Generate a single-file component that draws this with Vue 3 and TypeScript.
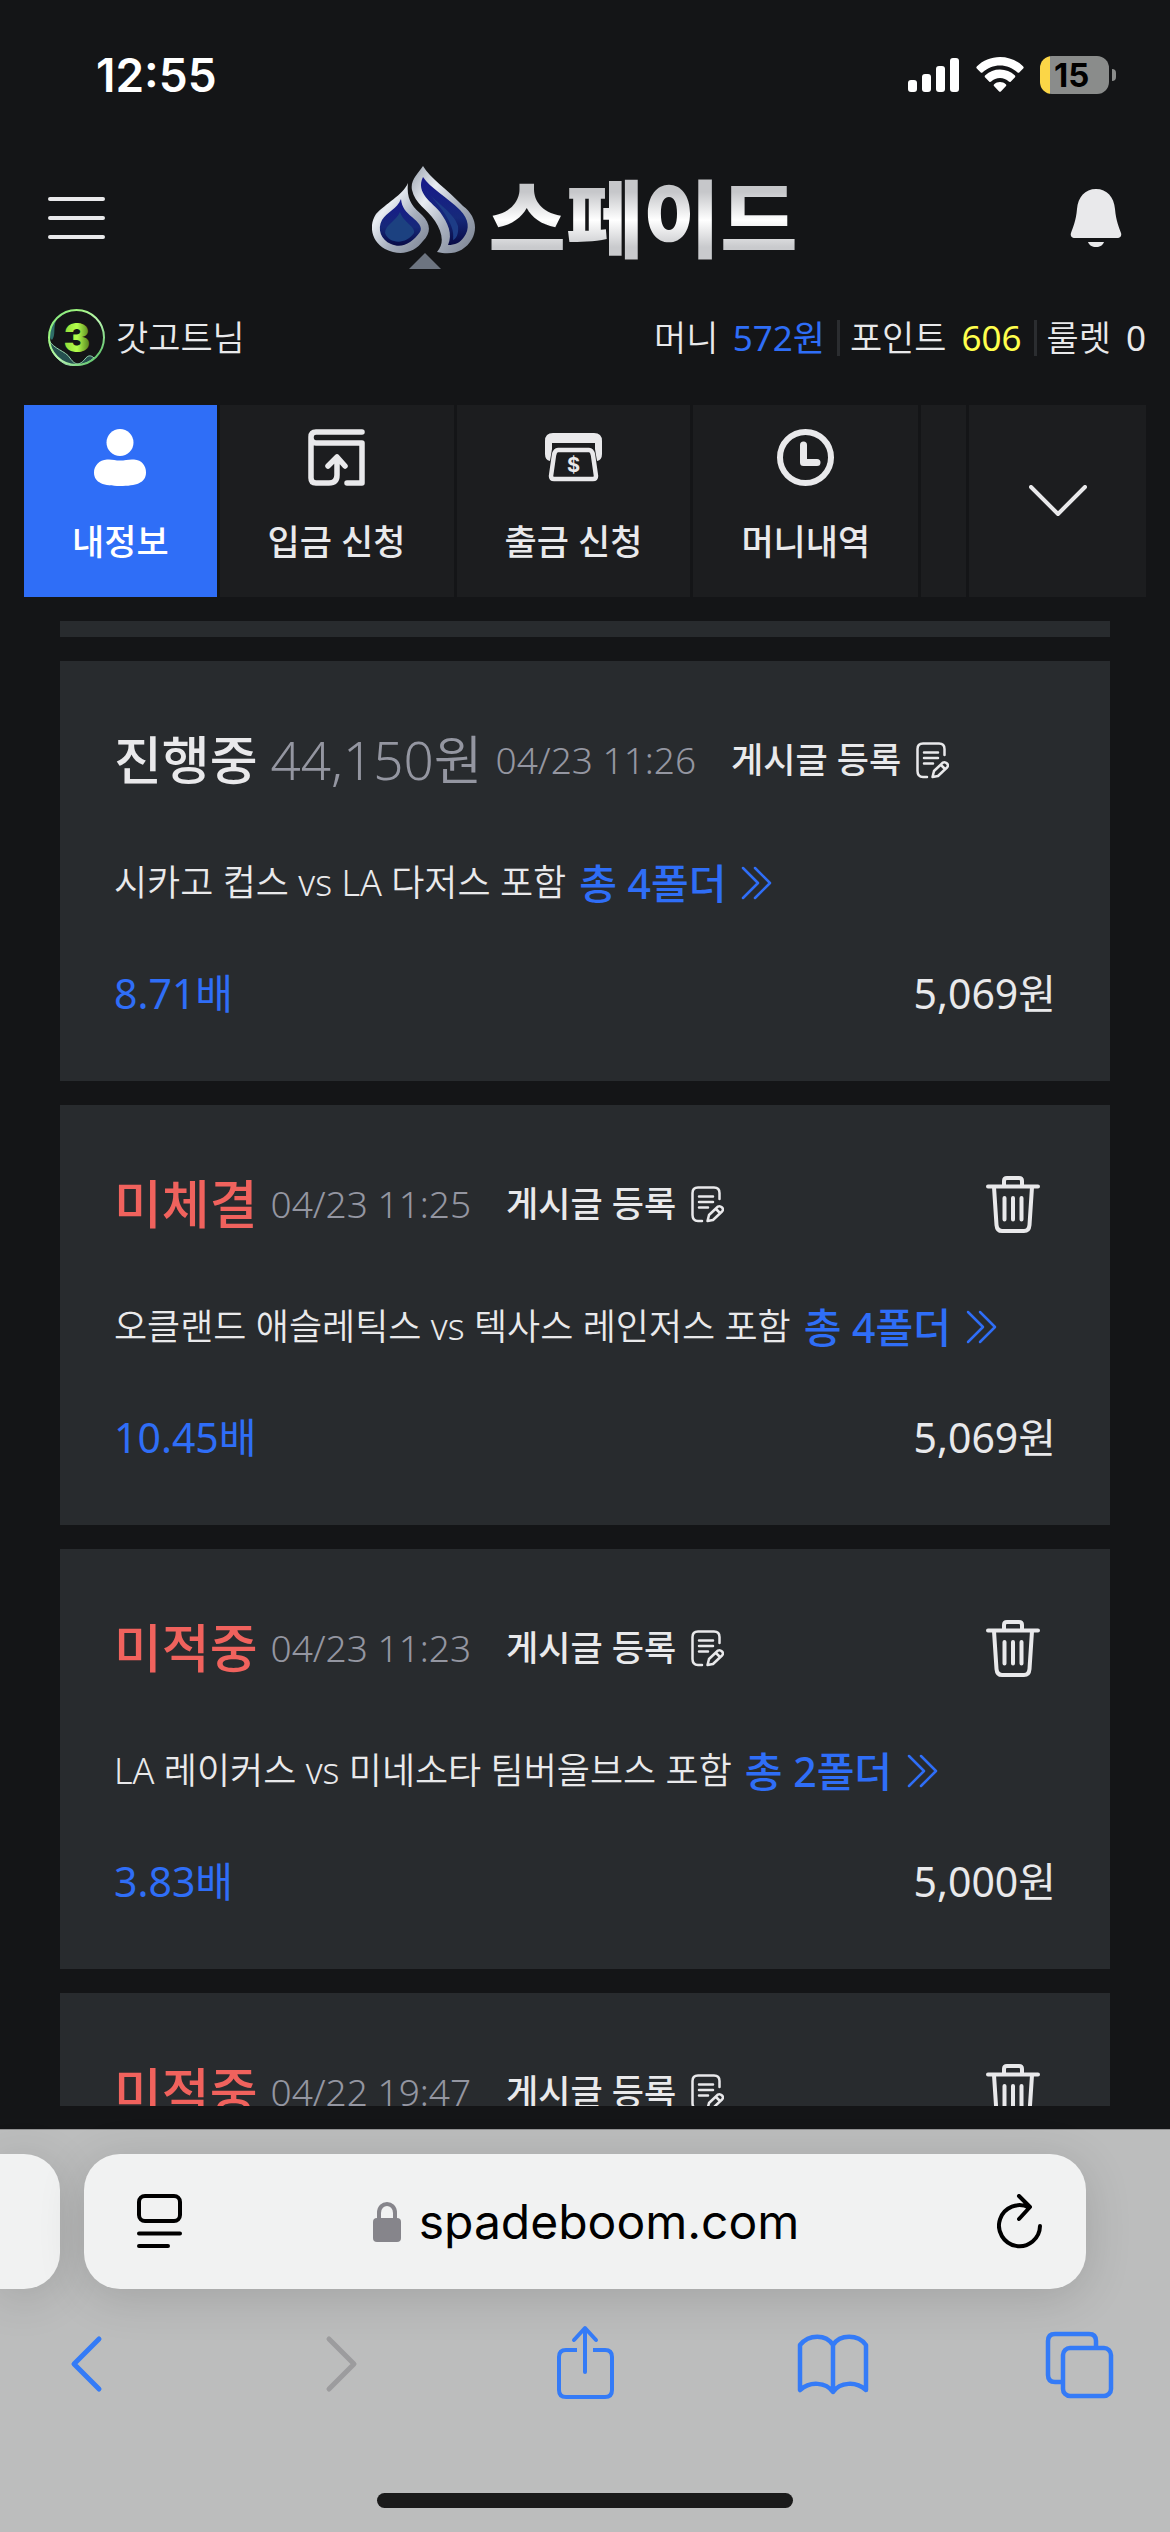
<script setup lang="ts">
interface Bet {
  status: string
  lost: boolean
  amount?: string
  date: string
  match?: string
  folders?: string
  odds?: string
  stake?: string
}

const bets: Bet[] = [
  { status: '진행중', lost: false, amount: '44,150원', date: '04/23 11:26', match: '시카고 컵스 vs LA 다저스 포함', folders: '총 4폴더', odds: '8.71배', stake: '5,069원' },
  { status: '미체결', lost: true, date: '04/23 11:25', match: '오클랜드 애슬레틱스 vs 텍사스 레인저스 포함', folders: '총 4폴더', odds: '10.45배', stake: '5,069원' },
  { status: '미적중', lost: true, date: '04/23 11:23', match: 'LA 레이커스 vs 미네소타 팀버울브스 포함', folders: '총 2폴더', odds: '3.83배', stake: '5,000원' },
  { status: '미적중', lost: true, date: '04/22 19:47' },
]
</script>

<template>
  <div class="screen">
    <div class="status-bar">
      <time class="clock">12:55</time>
      <div class="indicators">
        <svg width="52" height="36" viewBox="0 0 52 36" fill="#fff">
          <rect x="0" y="23" width="9" height="12" rx="3" />
          <rect x="14" y="17" width="9" height="18" rx="3" />
          <rect x="28" y="9" width="9" height="26" rx="3" />
          <rect x="42" y="1" width="9" height="34" rx="3" />
        </svg>
        <svg width="48" height="36" viewBox="0 0 48 36" fill="#fff">
          <path d="M24 0C33 0 41 3.500 47 9.200c.9.900.9 1.600.2 2.400l-3.700 3.700c-.7.700-1.500.7-2.200 0C36.500 11 30.500 8.500 24 8.500S11.500 11 6.700 15.300c-.7.700-1.500.7-2.200 0L.8 11.600c-.7-.8-.7-1.500.2-2.400C7 3.500 15 0 24 0z" />
          <path d="M24 12.500c5.700 0 10.800 2.100 14.700 5.800.8.700.8 1.500.1 2.200l-3.900 3.900c-.7.700-1.400.7-2.100.1A12.800 12.800 0 0 0 24 21c-3.400 0-6.500 1.300-8.800 3.500-.7.600-1.400.6-2.100-.1l-3.900-3.900c-.7-.7-.7-1.500.1-2.200A21.500 21.500 0 0 1 24 12.500z" />
          <path d="M24 25c2.200 0 4.300.8 5.800 2.200.7.700.7 1.400 0 2.100l-4.700 4.900c-.7.800-1.500.8-2.200 0l-4.700-4.900c-.7-.7-.7-1.400 0-2.100C19.700 25.800 21.800 25 24 25z" />
        </svg>
        <span class="battery">
          <span class="battery-level">15</span>
        </span>
      </div>
    </div>

    <header class="header">
      <button class="icon-button" type="button" aria-label="메뉴">
        <svg width="57" height="42" viewBox="0 0 57 42" stroke="#e9e9eb" stroke-width="4" stroke-linecap="round">
          <path d="M2 2H55M2 21H55M2 40H55" />
        </svg>
      </button>
      <a class="logo" href="#">
        <svg width="104" height="104" viewBox="0 0 104 104">
          <defs>
            <linearGradient id="steel" x1="0" y1="0" x2="1" y2="1">
              <stop offset="0" stop-color="#9aa2ae" />
              <stop offset=".3" stop-color="#e9edf3" />
              <stop offset=".6" stop-color="#a7afbd" />
              <stop offset="1" stop-color="#788090" />
            </linearGradient>
            <linearGradient id="gem" x1="0" y1="0" x2="0" y2="1">
              <stop offset="0" stop-color="#17188c" />
              <stop offset=".6" stop-color="#16297a" />
              <stop offset="1" stop-color="#080a45" />
            </linearGradient>
          </defs>
          <path fill="url(#steel)" d="M36 17C31 29 13 38 4 48C-4 60 0 76 13 83C29 91 43 86 51 75C60 66 58 57 50 49C41 41 34 34 36 17Z" />
          <path fill="url(#gem)" d="M29 33C25 43 15 46 10 54C5 63 9 74 19 78C30 83 40 77 48 66C51 61 46 56 40 51C34 46 30 42 29 33Z" />
          <path fill="#1c4180" d="M28 46C24 55 13 59 13 67C17 78 34 79 42 67C44 61 31 56 28 46Z" />
          <path fill="url(#steel)" d="M51 0C58 12 75 23 91 40C103 49 106 62 100 73C93 85 81 90 65 86C73 77 70 66 63 55C55 43 43 38 40 24C38 14 46 8 51 0Z" />
          <path fill="url(#gem)" d="M51 11C58 22 75 31 88 44C97 53 98 63 92 71C88 77 83 79 76 79C81 68 76 57 68 46C61 37 43 27 51 11Z" />
          <path fill="#1d3c86" d="M54 24C60 34 82 46 86 60C87 68 84 73 81 74C84 57 66 39 54 24Z" />
          <path fill="#6d7480" d="M53 87L69 103H37Z" />
        </svg>
        <span class="wordmark">스페이드</span>
      </a>
      <button class="icon-button bell" type="button" aria-label="알림">
        <svg width="52" height="58" viewBox="0 0 52 58" fill="#e9e9eb">
          <path d="M26 0C37 0 44 8 45 20C46 32 49 38 51 44C52 47 50 49 47 49H5C2 49 0 47 1 44C3 38 6 32 7 20C8 8 15 0 26 0Z" />
          <path d="M18 53H34C33 56 30 58 26 58S19 56 18 53Z" />
        </svg>
      </button>
    </header>

    <section class="account">
      <div class="user">
        <svg width="57" height="57" viewBox="0 0 57 57">
          <defs>
            <linearGradient id="ring" x1="0" y1="0" x2="1" y2="1">
              <stop offset="0" stop-color="#78e08a" />
              <stop offset=".25" stop-color="#9df57c" />
              <stop offset=".55" stop-color="#b9f5b0" />
              <stop offset="1" stop-color="#46b858" />
            </linearGradient>
            <linearGradient id="badge" x1="0" y1="0" x2="1" y2="0">
              <stop offset="0" stop-color="#8fd838" />
              <stop offset=".5" stop-color="#b4ff4c" />
              <stop offset="1" stop-color="#4d7a1c" />
            </linearGradient>
          </defs>
          <path fill="#25504f" stroke="#9ad8b0" d="M1 31C5 40 18 42 22 49C28 58 33 55 37 50C40 46 43 46 46 49C37 57 25 58 17 55C8 50 2 42 1 31Z" />
          <path fill="#2e6d68" d="M1 28C2 20 4 15 8 12C5 19 8 26 4 31Z" />
          <circle cx="28.500" cy="28.500" r="27.500" fill="none" stroke="url(#ring)" stroke-width="2" />
          <text x="29" y="43" text-anchor="middle" font-family="Inter, sans-serif" font-weight="900" font-size="40" fill="url(#badge)">3</text>
        </svg>
        <span>갓고트님</span>
      </div>
      <div class="balances">
        <span>머니 <b class="money">572원</b></span>
        <span class="divided">포인트 <b class="points">606</b></span>
        <span class="divided">룰렛 <b>0</b></span>
      </div>
    </section>

    <nav class="tabs">
      <button class="tab active" type="button">
        <svg width="57" height="57" viewBox="0 0 57 57" fill="#fff">
          <circle cx="28" cy="13.500" r="13.500" />
          <path d="M15 30.500C20 30 23 31.500 28 31.500S37 30 42 30.500C50 31 54 37 54 43.500C54 54 44 57 28 57S2 54 2 43.500C2 37 7 31 15 30.500Z" />
        </svg>
        내정보
      </button>
      <button class="tab" type="button">
        <svg width="57" height="57" viewBox="0 0 57 57" fill="none" stroke="#e9e9eb" stroke-width="5.500" stroke-linecap="round" stroke-linejoin="round">
          <path d="M54 3H8Q3 3 3 8V49Q3 54 8 54H21Q29 54 29 46V30M20 37L29 28L37 37M39 54H54V14H8Q3 14 3 8" />
        </svg>
        입금 신청
      </button>
      <button class="tab" type="button">
        <svg width="57" height="57" viewBox="0 0 57 57">
          <path fill="#e9e9eb" d="M8 4H49Q57 4 57 12V25Q57 31 52 32L50 20V14H7V20L5 32Q0 31 0 25V12Q0 4 8 4Z" />
          <path fill="#1c1d1f" d="M7 14H50V19H7Z" />
          <path fill="#1c1d1f" stroke="#e9e9eb" stroke-width="4.500" stroke-linejoin="round" d="M13 21H44Q47 21 48 26L51 47Q51 50 48 50H9Q6 50 6 47L9 26Q10 21 13 21Z" />
          <text x="28.500" y="43" text-anchor="middle" font-family="Inter, sans-serif" font-weight="700" font-size="20" fill="#e9e9eb">$</text>
        </svg>
        출금 신청
      </button>
      <button class="tab" type="button">
        <svg width="57" height="57" viewBox="0 0 57 57" fill="none" stroke="#e9e9eb" stroke-linecap="round" stroke-linejoin="round">
          <circle cx="28.500" cy="28.500" r="25.500" stroke-width="6" />
          <path stroke-width="7" d="M26.500 16V33.500H40" />
        </svg>
        머니내역
      </button>
      <button class="tab next" type="button" aria-label="다음 메뉴"></button>
      <button class="tab expand" type="button" aria-label="펼치기">
        <svg width="58" height="32" viewBox="0 0 58 32" fill="none" stroke="#e9e9eb" stroke-width="4" stroke-linecap="round" stroke-linejoin="round">
          <path d="M2 2L29 29L56 2" />
        </svg>
      </button>
    </nav>

    <main class="bets">
      <div class="card-tail"></div>
      <article v-for="(bet, index) in bets" :key="index" class="card">
        <div class="summary">
          <strong class="state" :class="{ lost: bet.lost }">{{ bet.status }}</strong>
          <span v-if="bet.amount" class="amount">{{ bet.amount }}</span>
          <time class="date">{{ bet.date }}</time>
          <button class="post" type="button">
            게시글 등록
            <svg width="33" height="37" viewBox="0 0 33 37" fill="none" stroke="#e9e9eb" stroke-width="2.500" stroke-linecap="round" stroke-linejoin="round">
              <path d="M11 35H7Q1.500 35 1.500 29V7Q1.500 1.500 7 1.500H23Q28.500 1.500 28.500 7V13M8 10.500H22M8 16H22M8 21.500H17" />
              <path d="M16.500 35L18 29L27 20.500Q29 19.500 31 21.500T31 25.500L22 34Z M25 23L28 26" />
            </svg>
          </button>
          <button v-if="bet.lost" class="trash" type="button" aria-label="삭제">
            <svg width="54" height="57" viewBox="0 0 54 57" fill="none" stroke="#e9e9eb" stroke-width="4" stroke-linecap="round" stroke-linejoin="round">
              <path d="M2 10.500H52M18 10V5Q18 2 21 2H33Q36 2 36 5V10M8 11L10.500 49Q11 55 16 55H38Q43 55 43.500 49L46 11M18.500 22V43.500M27 22V43.500M35.500 22V43.500" />
            </svg>
          </button>
        </div>
        <div v-if="bet.match" class="match">
          <span>{{ bet.match }}</span>
          <a class="folders" href="#">
            {{ bet.folders }}
            <svg width="31" height="34" viewBox="0 0 31 34" fill="none" stroke="#2f6ef7" stroke-width="2.500" stroke-linecap="round" stroke-linejoin="round">
              <path d="M2 2L17 17L2 32M14 2L29 17L14 32" />
            </svg>
          </a>
        </div>
        <div v-if="bet.odds" class="payout">
          <span class="odds">{{ bet.odds }}</span>
          <span>{{ bet.stake }}</span>
        </div>
      </article>
    </main>

    <footer class="browser">
      <div class="pages">
        <div class="page previous"></div>
        <div class="page current">
          <button type="button" aria-label="페이지 메뉴">
            <svg width="46" height="55" viewBox="0 0 46 55" fill="none" stroke="#000" stroke-width="4" stroke-linecap="round">
              <rect x="2" y="2" width="41" height="25" rx="6" />
              <path d="M2 39.500H43M2 52H31" />
            </svg>
          </button>
          <button class="address" type="button">
            <svg width="28" height="40" viewBox="0 0 28 40">
              <rect y="16" width="28" height="24" rx="4" fill="#86858b" />
              <path d="M6 18V11C6 -1 22 -1 22 11V18" fill="none" stroke="#86858b" stroke-width="4" />
            </svg>
            spadeboom.com
          </button>
          <button type="button" aria-label="새로고침">
            <svg width="46" height="55" viewBox="0 0 46 55" fill="none" stroke="#000" stroke-width="4" stroke-linecap="round" stroke-linejoin="round">
              <path d="M43 32A20.500 20.500 0 1 1 32 13.500M22 2L33 13L22 25" />
            </svg>
          </button>
        </div>
      </div>
      <div class="toolbar">
        <button type="button" aria-label="뒤로">
          <svg width="92" height="76" viewBox="0 0 92 76" fill="none" stroke="#347bf7" stroke-width="5" stroke-linecap="round" stroke-linejoin="round">
            <path d="M59 14L34 39L59 64" />
          </svg>
        </button>
        <button type="button" aria-label="앞으로" disabled>
          <svg width="92" height="76" viewBox="0 0 92 76" fill="none" stroke="#9c9c9e" stroke-width="5" stroke-linecap="round" stroke-linejoin="round">
            <path d="M39 14L64 39L39 64" />
          </svg>
        </button>
        <button type="button" aria-label="공유">
          <svg width="92" height="76" viewBox="0 0 92 76" fill="none" stroke="#347bf7" stroke-width="4" stroke-linecap="round" stroke-linejoin="round">
            <path stroke-linecap="butt" d="M38 25H27Q20 25 20 32V65Q20 72 27 72H66Q73 72 73 65V32Q73 25 66 25H54" />
            <path d="M46 4V47M35 15L46 3L57 15" />
          </svg>
        </button>
        <button type="button" aria-label="책갈피">
          <svg width="92" height="76" viewBox="0 0 92 76" fill="none" stroke="#347bf7" stroke-width="4.500" stroke-linecap="round" stroke-linejoin="round">
            <path d="M44 20V67C37 57 21 56 11 65V20C20 9 37 9 44 20C51 9 69 9 77 20V65C67 56 51 57 44 67" />
          </svg>
        </button>
        <button type="button" aria-label="탭">
          <svg width="92" height="76" viewBox="0 0 92 76" fill="none" stroke="#347bf7" stroke-width="4.500">
            <path d="M24 57H17Q10 57 10 50V16Q10 9 17 9H51Q58 9 58 16V23" />
            <rect x="25" y="23" width="48" height="48" rx="7" />
          </svg>
        </button>
      </div>
      <div class="home-indicator"></div>
    </footer>
  </div>
</template>

<style>
body {
  margin: 0;
  background: #141517;
}
</style>

<style scoped>
.screen {
  display: flex;
  flex-direction: column;
  height: 100vh;
  overflow: hidden;
  background: #141517;
  color: #e9e9eb;
  font-family: "Noto Sans", "Noto Sans CJK KR", sans-serif;
  font-size: 35px;
  font-weight: 350;
  line-height: 48px;
}

.screen * {
  box-sizing: border-box;
}

svg {
  display: block;
  flex: none;
}

button {
  padding: 0;
  border: 0;
  background: none;
  color: inherit;
  font: inherit;
}

a {
  color: inherit;
  text-decoration: none;
}

.status-bar {
  display: flex;
  flex: none;
  align-items: center;
  justify-content: space-between;
  height: 150px;
  padding: 0 54px 0 96px;
}

.clock {
  color: #fff;
  font-family: Inter, sans-serif;
  font-size: 46px;
  font-weight: 600;
}

.indicators {
  display: flex;
  align-items: center;
  gap: 16px;
}

.battery {
  position: relative;
  width: 69px;
  height: 38px;
  margin-right: 7px;
  border-radius: 12px;
  background: linear-gradient(90deg, #fbd647 10px, #8a8c8b 10px);
  color: #000;
  font-family: Inter, sans-serif;
  font-size: 33px;
  font-weight: 700;
  line-height: 38px;
}

.battery-level {
  display: block;
  padding-left: 14px;
}

.battery::after {
  position: absolute;
  top: 13px;
  right: -7px;
  width: 4px;
  height: 12px;
  border-radius: 0 6px 6px 0;
  background: #8a8c8b;
  content: "";
}

.header {
  display: grid;
  flex: none;
  grid-template-columns: 60px 1fr 60px;
  align-items: center;
  height: 135px;
  padding: 0 48px;
}

.bell {
  justify-self: end;
}

.logo {
  display: flex;
  align-items: center;
  justify-content: center;
  gap: 12px;
}

.wordmark {
  padding-bottom: 6px;
  background: linear-gradient(#c6c7ca 25%, #fff 52%, #c9cacd 78%);
  background-clip: text;
  color: transparent;
  font-family: "Noto Sans CJK KR", sans-serif;
  font-size: 84px;
  font-weight: 900;
  line-height: 98px;
}

.account {
  display: flex;
  flex: none;
  align-items: center;
  justify-content: space-between;
  height: 105px;
  padding: 0 24px 0 48px;
}

.user {
  display: flex;
  align-items: center;
  gap: 11px;
}

.balances {
  display: flex;
  align-items: center;
}

.balances b {
  margin-left: 5px;
  font-weight: 400;
}

.balances .money {
  color: #2f6ef7;
}

.balances .points {
  color: #ffff4d;
}

.divided {
  display: flex;
  align-items: center;
  gap: 10px;
}

.divided::before {
  width: 3px;
  height: 36px;
  margin-left: 12px;
  background: #2b2d30;
  content: "";
}

.tabs {
  display: flex;
  flex: none;
  gap: 3px;
  height: 192px;
  margin: 15px 24px 24px;
}

.tab {
  display: flex;
  flex: none;
  flex-direction: column;
  align-items: center;
  gap: 32px;
  padding: 24px 48px 0;
  background: #1c1d1f;
  font-weight: 500;
}

.tab.active {
  background: #2f6ef7;
  color: #fff;
}

.tab.next {
  flex: 1;
  padding: 0;
}

.tab.expand {
  justify-content: center;
  width: 177px;
  padding: 0;
}

.bets {
  display: flex;
  flex: 1;
  flex-direction: column;
  gap: 24px;
  min-height: 0;
  margin: 0 60px 23px;
  overflow: hidden;
}

.card-tail {
  flex: none;
  height: 16px;
  background: #282b2e;
}

.card {
  flex: none;
  min-height: 420px;
  padding: 60px 54px 58px;
  background: #282b2e;
}

.summary {
  display: flex;
  align-items: center;
  height: 78px;
}

.state {
  font-size: 52px;
  font-weight: 500;
}

.state.lost {
  color: #f0625d;
}

.amount {
  margin-left: 13px;
  color: #9496a1;
  font-size: 53px;
}

.date {
  margin-left: 13px;
  color: #9496a1;
  font-size: 37px;
}

.post {
  display: flex;
  align-items: center;
  gap: 15px;
  margin-left: 35px;
  font-weight: 500;
}

.trash {
  margin: 0 16px 0 auto;
}

.match {
  display: flex;
  align-items: center;
  gap: 13px;
  height: 60px;
  margin-top: 54px;
  font-size: 36px;
}

.folders {
  display: flex;
  align-items: center;
  gap: 15px;
  color: #2f6ef7;
  font-size: 41px;
  font-weight: 500;
}

.payout {
  display: flex;
  align-items: center;
  justify-content: space-between;
  height: 60px;
  margin-top: 50px;
  font-size: 41px;
  font-weight: 400;
}

.odds {
  color: #2f6ef7;
}

.browser {
  display: flex;
  flex: none;
  flex-direction: column;
  border-top: 1px solid #929293;
  background: #bcbdbd;
}

.pages {
  display: flex;
  gap: 24px;
  height: 135px;
  margin: 24px 84px 0 0;
}

.page {
  background: #f1f2f2;
  box-shadow: 0 8px 48px rgba(0, 0, 0, 0.14);
}

.previous {
  width: 60px;
  border-radius: 0 36px 36px 0;
}

.current {
  display: flex;
  flex: 1;
  align-items: center;
  justify-content: space-between;
  padding: 0 43px 0 53px;
  border-radius: 36px;
}

.address {
  display: flex;
  align-items: center;
  gap: 18px;
  margin-right: 8px;
  color: #000;
  font-family: Inter, sans-serif;
  font-size: 48px;
  font-weight: 400;
}

.toolbar {
  display: flex;
  justify-content: space-between;
  margin-top: 36px;
  padding: 0 40px;
}

.home-indicator {
  width: 416px;
  height: 15px;
  margin: 92px auto 24px;
  border-radius: 8px;
  background: #1a1a1a;
}
</style>
